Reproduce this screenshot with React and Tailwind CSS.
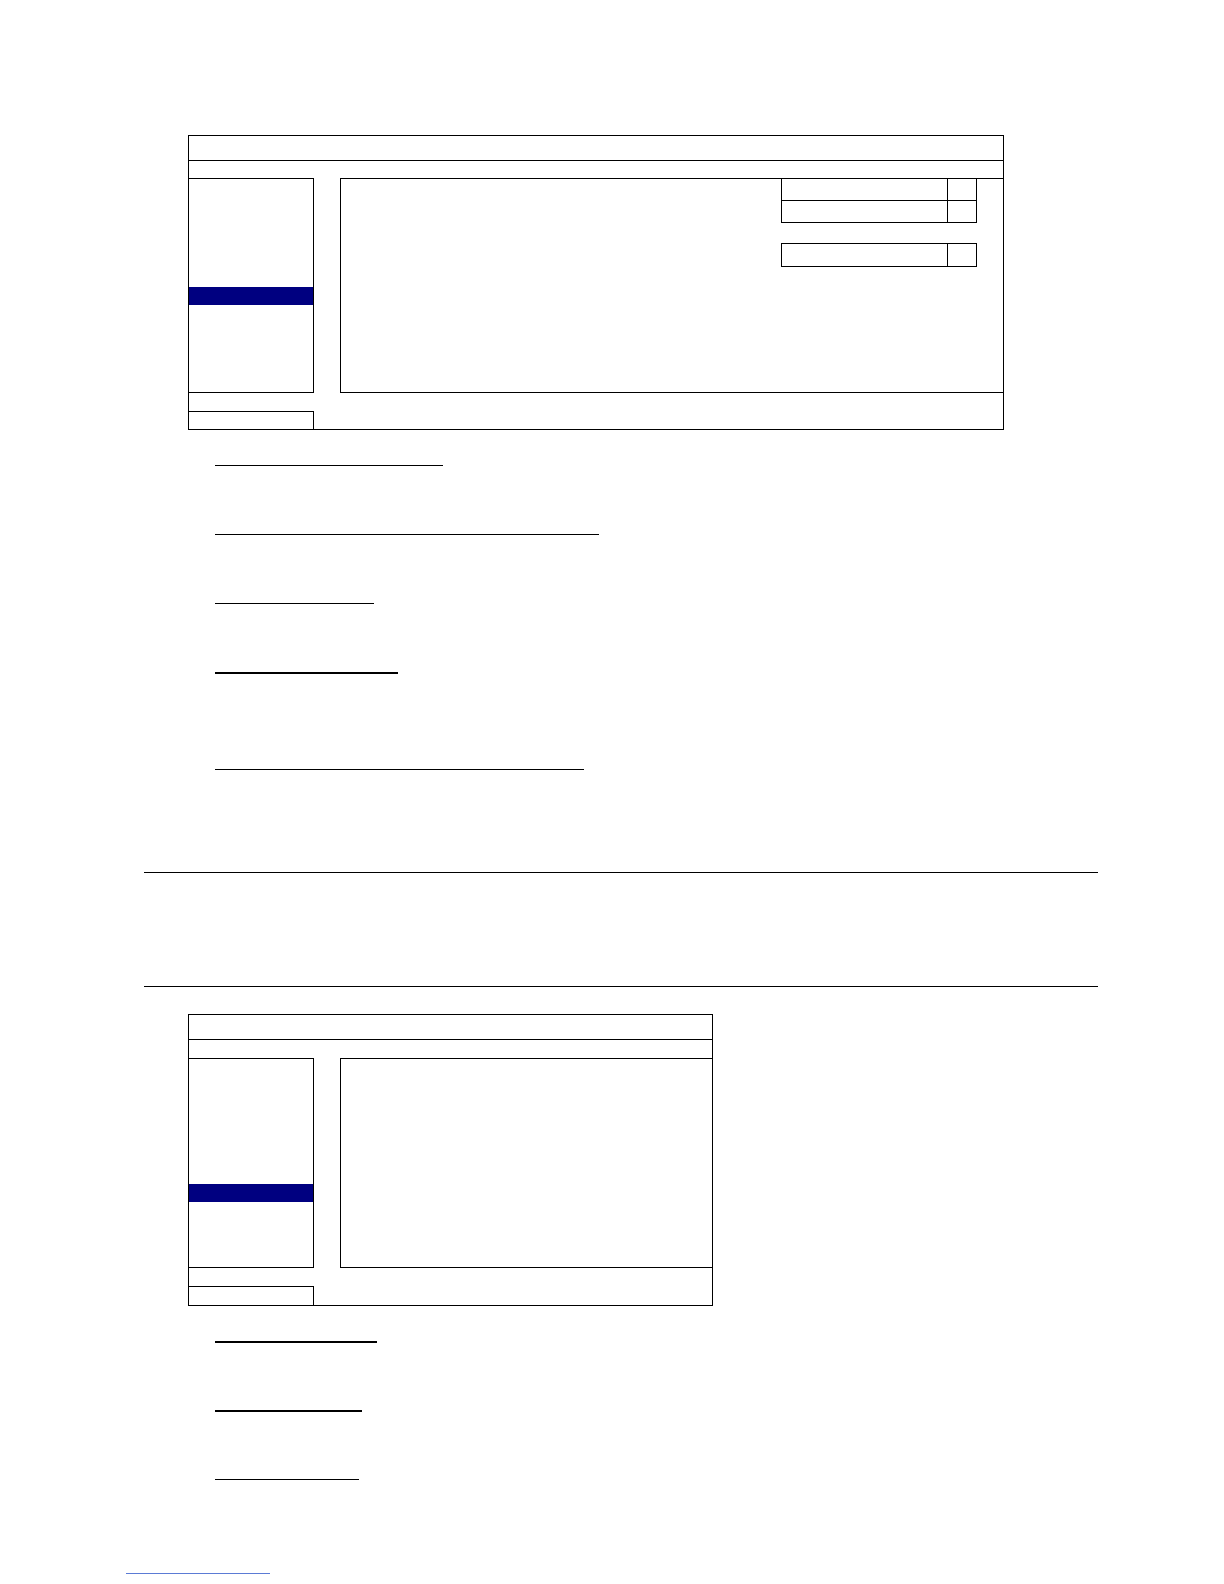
const MenuWindow = ({ width, gap, panelH, hiOffset, bottomH, dropdowns }) => (
  <div className="ml-[188px] border border-black flex flex-col" style={{ width }}>
    {/* title bar */}
    <div className="h-[25px] border-b border-black" />
    <div style={{ height: gap }} />
    {/* panels */}
    <div className="flex" style={{ height: panelH }}>
      <div className="w-[125px] border-t border-r border-b border-black flex flex-col">
        <div style={{ height: hiOffset }} />
        <div className="h-[18px] bg-[#000080]" />
      </div>
      <div className="w-[26px]" />
      <div className="flex-1 border-t border-l border-b border-black">
        {dropdowns && (
          <div className="ml-[440px] w-[196px] flex flex-col">
            <div className="flex h-[22px] border-l border-r border-b border-black">
              <div className="w-[166px] border-r border-black" />
            </div>
            <div className="flex h-[22px] border-l border-r border-b border-black">
              <div className="w-[166px] border-r border-black" />
            </div>
            <div className="mt-[20px] flex h-[24px] border border-black">
              <div className="w-[166px] border-r border-black" />
            </div>
          </div>
        )}
      </div>
    </div>
    <div className="h-[18px]" />
    <div className="w-[125px] border-t border-r border-black" style={{ height: bottomH }} />
  </div>
);

const Line = ({ mt, w, h = 1, left = 215 }) => (
  <div className="bg-black" style={{ marginTop: mt, width: w, height: h, marginLeft: left }} />
);

export default function App() {
  return (
    <div className="w-[1224px] h-[1584px] bg-white flex flex-col items-start overflow-hidden font-['Liberation_Sans',sans-serif]">
      <div className="h-[135px]" />
      <MenuWindow width={816} gap={17} panelH={215} hiOffset={108} bottomH={18} dropdowns />

      <Line mt={35} w={228} />
      <Line mt={68} w={384} />
      <Line mt={68} w={159} />
      <Line mt={68} w={183} h={2} />
      <Line mt={95} w={369} />

      <Line mt={102} w={954} left={144} />
      <Line mt={113} w={954} left={144} />

      <div className="h-[27px]" />
      <MenuWindow width={525} gap={18} panelH={210} hiOffset={125} bottomH={19} />

      <Line mt={35} w={162} h={2} />
      <Line mt={67} w={147} h={2} />
      <Line mt={67} w={144} />

      <div className="mt-[93px] ml-[126px] w-[144px] h-px bg-[#5b7bd5]" />
    </div>
  );
}
